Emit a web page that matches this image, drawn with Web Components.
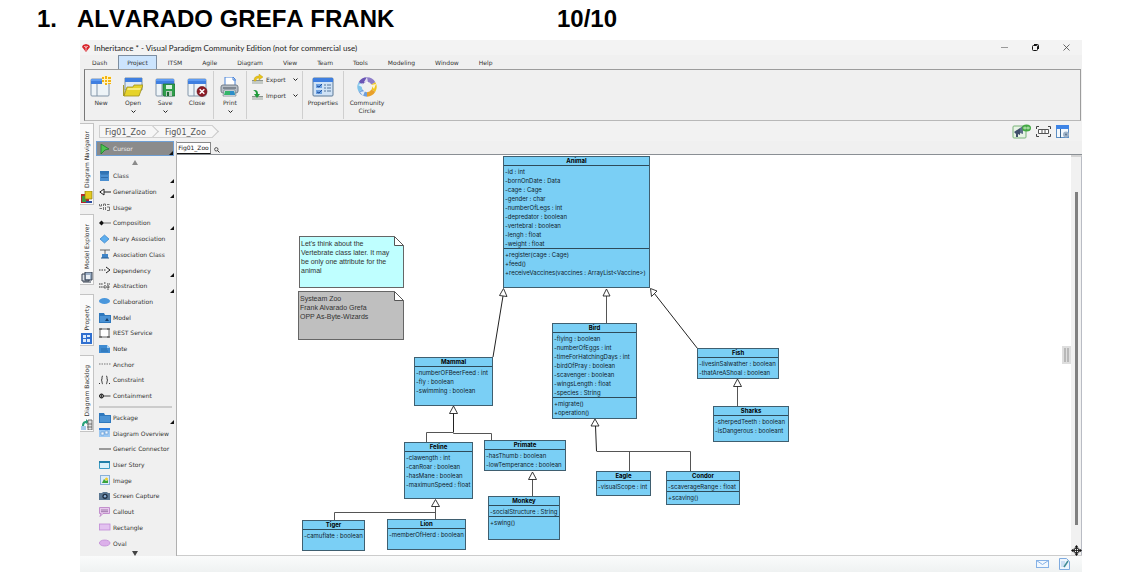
<!DOCTYPE html>
<html lang="en">
<head>
<meta charset="utf-8">
<title>Inheritance - Visual Paradigm</title>
<style>
html, body { margin: 0; background: #fff; }
body { min-height: 100vh; font-family: "DejaVu Sans", sans-serif; font-size: 6px; line-height: 9px; color: #333; display: flex; }
</style>
</head>
<body>
<zoo-page></zoo-page>
<script>
const RESET = `
  *, *::before, *::after { box-sizing: border-box; }
  button { font: inherit; color: inherit; background: none; border: 0; padding: 0; margin: 0; text-align: inherit; }
  a { color: inherit; text-decoration: none; }
  ul, h1, h2, p { margin: 0; padding: 0; list-style: none; font: inherit; }
`;
function define(tag, css, html) {
  const tpl = document.createElement('template');
  customElements.define(tag, class extends HTMLElement {
    constructor() {
      super();
      const root = this.attachShadow({ mode: 'open' });
      tpl.innerHTML = `<style>${RESET}${css}</style>` + (typeof html === 'function' ? html(this) : html);
      root.appendChild(tpl.content.cloneNode(true));
    }
  });
}

/* ---------- icons ---------- */
const win = `<rect x="1" y="2" width="18" height="17" rx="1" fill="#eef4f8" stroke="#8295a8"/><path d="M1 2h18v5H1z" fill="#3f7fe0"/><path d="M1 2h18v2H1z" fill="#5f9cf2"/><path d="M7 7v12" stroke="#8295a8"/>`;
const folderBlue = `<path d="M0 1h5l1 2h6v8H0z" fill="#2f78bd"/><path d="M1 4h10v6H1z" fill="#4c93d4"/>`;
const ICONS = {
  logo: [8, 8, `<path d="M4 0l3 1 1 2-4 5-4-5 1-2z" fill="#d8232a"/><path d="M2 2l2 2 2-2M4 4v3" stroke="#fff" stroke-width=".6" fill="none"/><circle cx="4" cy="2.500" r=".8" fill="#f7b5b5"/>`],
  new: [22, 21, `<g transform="translate(0 1)">${win}</g><path d="M12 0h9v8h-9z" fill="#fff3c4"/><path d="M12 1h2v2h-2zM15 0h2v3h-2zM18 1h3v2h-3zM12 4h2v2h-2zM15 4h2v2h-2zM18 4h3v2h-3zM15 7h2v2h-2zM18 7h3v1h-3z" fill="#f3b412"/>`],
  open: [20, 20, `<path d="M2 1h17v12H2z" fill="#dfeaf5" stroke="#7b8ea0"/><path d="M2 1h17v4H2z" fill="#3f7fe0"/><path d="M0 8h1l1 11H0z" fill="#a59a2e"/><path d="M4 10h6l1-2h9l-4 11H1z" fill="#e6d32a" stroke="#a0911b" stroke-width=".8"/><path d="M5 11h13l-1 2H4z" fill="#f6ec7c"/>`],
  save: [20, 20, `${win}<path d="M8 7h12v12H9l-1-1z" fill="#2f9e4b" stroke="#1d6b31" stroke-width=".7"/><path d="M11 8h6v4h-6z" fill="#d9f2df"/><path d="M11 14h6v5h-6z" fill="#b9cfc0"/><path d="M12 15h2v4h-2z" fill="#1f6b33"/>`],
  close: [21, 20, `${win}<circle cx="15" cy="14.500" r="5" fill="#8d1c26" stroke="#5c0e15" stroke-width=".6"/><path d="M12.700 12.200l4.600 4.600m0-4.600l-4.600 4.600" stroke="#fff" stroke-width="1.500"/>`],
  print: [20, 20, `<path d="M5 0h8l2 2v8H5z" fill="#fff" stroke="#4a84d8"/><path d="M13 0v3h3" fill="none" stroke="#4a84d8"/><rect x="1" y="8" width="17" height="8" rx="2" fill="#b7bec6" stroke="#737d88"/><path d="M3 10h13v2H3z" fill="#7f8892"/><path d="M4 13h11l1 6H3z" fill="#f4f7f9" stroke="#6f7a85" stroke-width=".7"/><path d="M5 14h9l1 4H4z" fill="#35b56a"/><path d="M10 14h4l1 4h-5z" fill="#2c8dc9"/>`],
  export: [12, 10, `<path d="M0 6h11v4H0z" fill="#c4cac6"/><path d="M0 6h11v1H0z" fill="#8b938e"/><path d="M2 7c0-4 2-5 5-5V0l4 3-4 3V4C5 4 4 5 4 7z" fill="#e9c51b" stroke="#b8960d" stroke-width=".4"/>`],
  import: [12, 10, `<path d="M0 6h11v4H0z" fill="#c4cac6"/><path d="M0 6h11v1H0z" fill="#8b938e"/><path d="M1 0c4 0 5 1 5 4h2L5 8 2 4h2C4 2 3 1 1 0z" fill="#1e9a3a"/>`],
  properties: [22, 20, `<rect x="1" y="1" width="20" height="18" rx="1" fill="#cfe2f6" stroke="#5b7896"/><path d="M1 1h20v4H1z" fill="#3f7fe0"/><path d="M4 7h6v4H4zM4 13h6v4H4z" fill="#6ea2e2"/><path d="M5 9l2 1 3-3M5 15l2 1 3-3" stroke="#1e4f9c" fill="none"/><path d="M12 8h2M15 8h4M12 11h2M15 11h4M12 14h2M15 14h4" stroke="#54779c"/>`],
  community: [20, 20, `<g fill="none" stroke-width="4.500"><path d="M3.600 6.300A7.400 7.400 0 0 1 10 2.600" stroke="#6a55b5"/><path d="M10 2.600A7.400 7.400 0 0 1 16.400 6.300" stroke="#8d7cc8"/><path d="M16.400 6.300A7.400 7.400 0 0 1 16.400 13.700" stroke="#f0c51d"/><path d="M16.400 13.700A7.400 7.400 0 0 1 10 17.400" stroke="#e8a02a"/><path d="M10 17.400A7.400 7.400 0 0 1 3.600 13.700" stroke="#6f9fdc"/><path d="M3.600 13.700A7.400 7.400 0 0 1 3.600 6.300" stroke="#7fc3ea"/></g><path d="M10 0l-3 5 4 1zM19 7l-5 1 3 4zM6 19l2-5-5 1zM1 8l4 2 1-4z" fill="#fff" opacity=".8"/>`],
  chevron: [5, 3, `<path d="M.5 .5l2 2 2-2" fill="none" stroke="#222"/>`],
  minimize: [7, 7, `<path d="M0 3.500h7" stroke="#999"/>`],
  restore: [7, 7, `<rect x=".5" y="1.500" width="5" height="5" rx="1" fill="none" stroke="#111"/><path d="M2 .5h3.500q1 0 1 1V5" fill="none" stroke="#111"/>`],
  exit: [7, 7, `<path d="M.5 .5l6 6m0-6l-6 6" stroke="#444" stroke-width=".8"/>`],
  announce: [19, 15, `<rect x="1" y="2" width="13" height="12" rx="1" fill="#e7f3e5" stroke="#79b378"/><path d="M2 8l6-4v7l-2-1v3H4v-3z" fill="#40506b"/><path d="M8 4l3-2v8l-3-1z" fill="#5f6f8c"/><ellipse cx="14.500" cy="4" rx="4.500" ry="3.500" fill="#44a944"/><path d="M11 4h7M13 2.500v3M16 2.500v3" stroke="#d5f2d0" stroke-width=".8"/>`],
  fit: [15, 11, `<path d="M.5 3V.5H3M12 .5h2.500V3M.5 8v2.500H3M12 10.500h2.500V8" fill="none" stroke="#444"/><path d="M2.500 3.500h10v4h-10zM6 3.500v4M9 3.500v4" fill="#fff" stroke="#555"/>`],
  panel: [14, 13, `<rect x=".5" y=".5" width="12" height="12" fill="#f3f8fc" stroke="#5d8fc4"/><path d="M0 0h13v4H0z" fill="#3f85e6"/><path d="M4.500 4v9" stroke="#3a648e"/><circle cx="10" cy="9.500" r="3" fill="#9eb3c9"/><circle cx="10" cy="9.500" r="1" fill="#5d7590"/>`],
  cursor: [12, 10, `<path d="M2 0l8 5-4 1-4 4z" fill="#4dc552" stroke="#1e7d2b" stroke-width=".8"/>`],
  class: [12, 10, `<path d="M1 0h9v10H1z" fill="#4b8fd0"/><path d="M1 0h9v2.500H1z" fill="#2f73b5"/><path d="M2 3h7M2 6.500h7" stroke="#255f99" stroke-width=".7"/>`],
  generalization: [12, 10, `<path d="M5 2v6L.8 5z" fill="#fff" stroke="#222"/><path d="M5 5h7" stroke="#222"/>`],
  usage: [12, 10, `<path d="M.5 2v2h2V2M4.500 4V2h2v2M8 2.500h2.500M.5 6.500h2.500M4.500 5v3M6.500 5v3M8 5h2.500v3.500H8" fill="none" stroke="#555" stroke-width=".8"/>`],
  composition: [12, 10, `<path d="M0 5l2.500-2.500L5 5 2.500 7.500z" fill="#111"/><path d="M5 5h7" stroke="#777"/>`],
  nary: [12, 10, `<path d="M5.500 1L10 5 5.500 9 1 5z" fill="#5eaeee" stroke="#2f7dc4" stroke-width=".7"/>`],
  assoc: [12, 10, `<path d="M1 1h10M6 1v4" stroke="#444" stroke-width=".8"/><path d="M3 5h6v4H3z" fill="#3f84c7"/><path d="M2 9h8" stroke="#245a90"/>`],
  dependency: [12, 10, `<path d="M0 5h7" stroke="#333" stroke-dasharray="1.500 1"/><path d="M7 2l4 3-4 3" fill="none" stroke="#222"/>`],
  abstraction: [12, 10, `<path d="M0 3h4M5 2h2M8 3h3M0 6h6M7 6h4M6 4v4M9 4v5" stroke="#333" stroke-width="1" stroke-dasharray="1.500 .6"/>`],
  collaboration: [12, 10, `<ellipse cx="5.500" cy="5" rx="5.500" ry="3" fill="#4a97dc"/>`],
  model: [12, 11, `${folderBlue}<path d="M6 9l2-3 2 3z" fill="#153f6c"/>`],
  rest: [12, 10, `<rect x="1" y="1" width="9" height="8" fill="#fff" stroke="#666"/><path d="M0 1h3M8 1h3M0 9h3M8 9h3" stroke="#444"/>`],
  note: [12, 10, `<path d="M0 1h8l3 3v5H0z" fill="#3f8bd2"/><path d="M8 1v3h3" fill="#a8d0f2"/><path d="M2 5h6M2 7h7" stroke="#2467a4" stroke-width=".8"/>`],
  anchor: [12, 10, `<path d="M0 5h12" stroke="#777" stroke-dasharray="1.500 1"/>`],
  constraint: [12, 10, `<path d="M4 1q-1.500 0-1 2t-1 2q1 0 1 2t1 2M7 1q1.500 0 1 2t1 2q-1 0-1 2t-1 2" fill="none" stroke="#333" stroke-width=".9"/><path d="M0 8.500h1M10 8.500h1" stroke="#333"/>`],
  containment: [12, 10, `<circle cx="2.500" cy="5" r="2" fill="#fff" stroke="#111"/><path d="M.5 5h11M2.500 3v4" stroke="#333" stroke-width=".9"/>`],
  package: [12, 11, folderBlue],
  overview: [12, 10, `<path d="M0 0h11v9H0z" fill="#9cc8f2"/><path d="M0 0h11v2H0z" fill="#2f7fe0"/><path d="M2 4h3v3H2zM6 3h3v3H6z" fill="#eef6fd" stroke="#5a96d2" stroke-width=".6"/>`],
  connector: [12, 10, `<path d="M0 5h12" stroke="#444"/>`],
  story: [12, 10, `<path d="M.5 1.500h10v7H.5z" fill="#d9f1fa" stroke="#3a9ac2"/><path d="M0 1h11v2H0z" fill="#1f7fa8"/>`],
  image: [12, 11, `<rect x="1.500" y=".5" width="9" height="9" fill="#dcecfa" stroke="#88b0d8"/><path d="M3 8l2-4 2 2 2-1v3z" fill="#38a33a"/><circle cx="7.500" cy="4" r="1.500" fill="#f0cf2b"/>`],
  capture: [12, 10, `<path d="M0 2h3l1-1h4l1 1h2v7H0z" fill="#5a7691"/><circle cx="6" cy="5.300" r="2.600" fill="#1f2f42"/><circle cx="6" cy="5.300" r="1.200" fill="#8fb4dc"/>`],
  callout: [12, 10, `<path d="M.5 .5h10v6H4l-3 3 1-3H.5z" fill="#e9c9ee" stroke="#b77cc4" stroke-width=".8"/><path d="M2 3h7M2 4.700h7" stroke="#7e5689" stroke-width=".7"/>`],
  rectangle: [12, 10, `<rect x=".5" y="2" width="10.500" height="6" fill="#e3c2f0" stroke="#c08ad6" stroke-width=".8"/>`],
  oval: [12, 10, `<ellipse cx="5.700" cy="5" rx="5.300" ry="3" fill="#dcb0ea" stroke="#c08ad6" stroke-width=".8"/>`],
  navigator: [12, 12, `<path d="M0 3h8v9H0z" fill="#b3252b"/><path d="M1 5h4v6H1z" fill="#3a9c43"/><path d="M4 0h7v8H4z" fill="#e4c91f" stroke="#8b7a12" stroke-width=".7"/><path d="M5 10h6v2H5z" fill="#2d4d9e"/>`],
  explorer: [12, 11, `<path d="M1 2h7v7H1z" fill="#dfe5ec" stroke="#333d4d"/><path d="M4 0h7v8H4z" fill="#9cb0c8" stroke="#333d4d"/><path d="M5 3h4v4H5z" fill="#e9eef4"/><path d="M2 10h8" stroke="#333d4d"/>`],
  property: [11, 11, `<path d="M0 0h11v11H0z" fill="#2f6fd0"/><path d="M2 2h3v3H2zM2 6h3v3H2zM6 2h3v2H6zM6 6h3v3H6z" fill="#dcebfb"/>`],
  backlog: [12, 11, `<path d="M1 7c0-4 2-5 4-5V0l3 3-3 2V4C4 4 3 5 3 7z" fill="#27a27a"/><path d="M0 7h5v4H0z" fill="#a6c9ea"/><path d="M7 1h4v10H7zM6 5h5M6 8h5" fill="#e0e0e0" stroke="#555" stroke-width=".8"/>`],
  search: [6, 6, `<circle cx="2.300" cy="2.300" r="1.700" fill="none" stroke="#333" stroke-width=".8"/><path d="M3.500 3.500l2 2" stroke="#333"/>`],
  up: [6, 5, `<path d="M3 0l3 5H0z" fill="#8a8a8a"/>`],
  down: [6, 5, `<path d="M0 0h6L3 5z" fill="#444"/>`],
  corner: [4, 4, `<path d="M4 0v4H0z" fill="#111"/>`],
  move: [11, 11, `<path d="M5.500 0l2 2.500h-4zM5.500 11l2-2.500h-4zM0 5.500l2.500-2v4zM11 5.500l-2.500-2v4z" fill="#111"/><circle cx="5.500" cy="5.500" r="2.500" fill="none" stroke="#111"/><path d="M5.500 2v7M2 5.500h7" stroke="#111" stroke-width=".8"/>`],
  mail: [13, 8, `<rect x=".5" y=".5" width="12" height="7" fill="#f2f8fe" stroke="#86b2e6"/><path d="M.5 .5l6 4 6-4" fill="none" stroke="#86b2e6"/>`],
  edit: [11, 12, `<path d="M.5 .5h7l3 3v8H.5z" fill="#eef5fd" stroke="#7fabdf"/><path d="M2 4h4M2 6h4M2 8h3" stroke="#a9c8ea"/><path d="M9 3L5 9" stroke="#3f8a94" stroke-width="1.500"/>`]
};
define('vp-icon', `:host { display: inline-flex; flex: none; } svg { display: block; }`, el => {
  const [w, h, body] = ICONS[el.getAttribute('name')];
  return `<svg width="${w}" height="${h}" viewBox="0 0 ${w} ${h}" aria-hidden="true">${body}</svg>`;
});

/* ---------- heading ---------- */
define('page-heading', `
  :host { display: block; height: 40px; padding: 5px 0 0 37px; }
  h1 { display: grid; grid-template-columns: 40px 480px auto; font: bold 24px/28px "Liberation Sans", Arial, sans-serif; font-kerning: none; color: #000; white-space: nowrap; }
`, `<h1><span>1.</span><span><slot></slot></span><span><slot name="score"></slot></span></h1>`);

/* ---------- window chrome ---------- */
define('title-bar', `
  :host { display: flex; align-items: center; height: 15px; background: #f3f3f3; padding: 0 12px 0 2px; gap: 4px; font: 8px/10px Lato, sans-serif; color: #222; }
  h2 { flex: 1; white-space: nowrap; }
  .controls { display: flex; gap: 24px; }
  button { display: flex; }
`, `<vp-icon name="logo"></vp-icon><h2><slot></slot></h2>
  <div class="controls"><button aria-label="Minimize"><vp-icon name="minimize"></vp-icon></button><button aria-label="Restore"><vp-icon name="restore"></vp-icon></button><button aria-label="Close window"><vp-icon name="exit"></vp-icon></button></div>`);

define('menu-bar', `
  :host { display: block; }
  nav { display: flex; gap: 2px; height: 14px; padding-left: 3px; }
  button { padding: 0 8px; border: 1px solid transparent; border-bottom: 0; }
  button[aria-current] { background: #cce4fd; border-color: #7d8da0; border-radius: 1px 1px 0 0; }
`, `<nav>${['Dash', 'Project', 'ITSM', 'Agile', 'Diagram', 'View', 'Team', 'Tools', 'Modeling', 'Window', 'Help'].map(n => `<button${n === 'Project' ? ' aria-current="page"' : ''}>${n}</button>`).join('')}</nav>`);

define('ribbon-button', `
  :host { display: block; width: 32px; }
  :host([wide]) { width: 40px; }
  button { width: 100%; display: flex; flex-direction: column; align-items: center; text-align: center; line-height: 8px; }
  .icon { height: 23px; display: flex; align-items: center; }
  .label { min-height: 12px; padding-top: 1px; }
`, el => `<button><span class="icon"><vp-icon name="${el.getAttribute('icon')}"></vp-icon></span><span class="label"><slot></slot></span>${el.hasAttribute('menu') ? '<vp-icon name="chevron"></vp-icon>' : ''}</button>`);

define('ribbon-bar', `
  :host { display: flex; height: 52px; margin: 0 1px 0 4px; border: 1px solid #9c9c9c; border-left-color: #777; border-bottom-color: #b8b8b8; }
  .group { display: flex; padding-top: 4px; border-right: 1px solid #cfcfcf; margin: 1px 0; }
  .last { border: 0; padding-left: 3px; }
  .stack { flex-direction: column; padding: 3px 4px 0 5px; gap: 6px; }
  .stack button { display: flex; align-items: center; gap: 2px; height: 10px; }
  .stack span { width: 25px; }
`, `<div class="group"><ribbon-button icon="new">New</ribbon-button><ribbon-button icon="open" menu>Open</ribbon-button><ribbon-button icon="save" menu>Save</ribbon-button><ribbon-button icon="close">Close</ribbon-button></div>
  <div class="group"><ribbon-button icon="print" menu>Print</ribbon-button></div>
  <div class="group stack"><button><vp-icon name="export"></vp-icon><span>Export</span><vp-icon name="chevron"></vp-icon></button><button><vp-icon name="import"></vp-icon><span>Import</span><vp-icon name="chevron"></vp-icon></button></div>
  <div class="group"><ribbon-button icon="properties" wide>Properties</ribbon-button></div>
  <div class="group last"><ribbon-button icon="community" wide>Community Circle</ribbon-button></div>`);

define('side-tabs', `
  :host { display: flex; flex-direction: column; gap: 9px; width: 14px; padding-top: 2px; flex: none; }
  button { display: flex; flex-direction: column; align-items: center; justify-content: flex-end; gap: 3px; background: #fafafa; border: 1px solid #c4c4c4; border-left: 0; padding-bottom: 1px; }
  span { writing-mode: vertical-rl; transform: rotate(180deg); white-space: nowrap; }
  .l { height: 82px; } .m { height: 71px; } .s { height: 52px; } .k { height: 77px; }
`, [['Diagram Navigator', 'navigator', 'l'], ['Model Explorer', 'explorer', 'm'], ['Property', 'property', 's'], ['Diagram Backlog', 'backlog', 'k']]
  .map(([t, i, c]) => `<button class="${c}"><span>${t}</span><vp-icon name="${i}"></vp-icon></button>`).join(''));

define('crumb-bar', `
  :host { display: flex; align-items: center; justify-content: space-between; height: 20px; padding: 0 12px 0 5px; background: #f2f2f2; }
  nav { display: flex; }
  a { position: relative; height: 13px; width: 60px; padding-left: 6px; font-size: 8px; line-height: 13px; color: #555; border: 1px solid #d0d0d0; border-width: 1px 0; background: #f6f6f6; }
  a:first-child { padding-left: 5px; border-left-width: 1px; width: 54px; }
  a::after { content: ""; position: absolute; z-index: 1; right: -4px; top: 1px; width: 9px; height: 9px; border: 1px solid #c6c6c6; border-width: 1px 1px 0 0; background: #f6f6f6; transform: rotate(45deg); }
  a + a { padding-left: 12px; }
  .tools { display: flex; align-items: center; gap: 5px; }
  button { display: flex; }
`, `<nav aria-label="Breadcrumb"><a href="#model">Fig01_Zoo</a><a href="#diagram">Fig01_Zoo</a></nav>
  <div class="tools"><button aria-label="Announce"><vp-icon name="announce"></vp-icon></button><button aria-label="Fit"><vp-icon name="fit"></vp-icon></button><button aria-label="Panels"><vp-icon name="panel"></vp-icon></button></div>`);

/* ---------- palette ---------- */
define('palette-item', `
  :host { display: flex; flex: 1 1 0; min-height: 0; }
  button { flex: 1; display: flex; align-items: center; gap: 2px; padding-left: 3px; position: relative; white-space: nowrap; }
  .corner { position: absolute; right: 0; bottom: 1px; }
  :host([selected]) { flex: 0 0 15px; }
  :host([selected]) button { background: #8b8b8b; border: 1px solid #6f9fd4; color: #eee; padding-left: 2px; }
  :host([selected]) .corner { bottom: 0; }
`, el => `<button><vp-icon name="${el.getAttribute('icon')}"></vp-icon><slot></slot>${el.hasAttribute('more') ? '<vp-icon class="corner" name="corner"></vp-icon>' : ''}</button>`);

define('tool-palette', `
  :host { display: flex; flex-direction: column; width: 83px; flex: none; padding: 0 2px; border-right: 1px solid #b0b0b0; background: #f0f0f0; }
  .scroll { display: flex; justify-content: center; align-items: center; flex: none; }
  .scroll.top { height: 12px; } .scroll.end { height: 5px; }
  hr { margin: 2px 3px; height: 2px; border: 0; background: #ccc; flex: none; width: 73px; }
`, (() => {
  const item = ([t, i, more]) => `<palette-item icon="${i}"${more ? ' more' : ''}>${t}</palette-item>`;
  return `<palette-item icon="cursor" selected more>Cursor</palette-item>
  <button class="scroll top" aria-label="Scroll up"><vp-icon name="up"></vp-icon></button>` +
  [['Class', 'class', 1], ['Generalization', 'generalization', 1], ['Usage', 'usage'], ['Composition', 'composition', 1], ['N-ary Association', 'nary'], ['Association Class', 'assoc'], ['Dependency', 'dependency', 1], ['Abstraction', 'abstraction', 1], ['Collaboration', 'collaboration'], ['Model', 'model'], ['REST Service', 'rest'], ['Note', 'note'], ['Anchor', 'anchor'], ['Constraint', 'constraint'], ['Containment', 'containment']].map(item).join('') + '<hr>' +
  [['Package', 'package', 1], ['Diagram Overview', 'overview'], ['Generic Connector', 'connector'], ['User Story', 'story'], ['Image', 'image'], ['Screen Capture', 'capture'], ['Callout', 'callout'], ['Rectangle', 'rectangle'], ['Oval', 'oval']].map(item).join('') +
  `<button class="scroll end" aria-label="Scroll down"><vp-icon name="down"></vp-icon></button>`;
})());

/* ---------- diagram ---------- */
const esc = s => s.replace(/</g, '&lt;').replace(/>/g, '&gt;');
const rows = s => s ? `<ul>${s.split('|').map(r => `<li>${esc(r)}</li>`).join('')}</ul>` : '';
define('uml-class', `
  :host { display: block; position: absolute; box-sizing: border-box; border: 1px solid #3f5f70; background: #7acff5; color: #10212b; font: 6px/9px Inter, sans-serif; white-space: nowrap; }
  h2 { font-weight: bold; text-align: center; line-height: 8px; color: #000; }
  ul { border-top: 1px solid #2e4b5a; padding: 1px 0 0 1px; }
`, el => `<h2>${el.getAttribute('name')}</h2>${rows(el.getAttribute('attrs'))}${rows(el.getAttribute('ops'))}`);

define('uml-note', `
  :host { display: block; position: absolute; box-sizing: border-box; border: 1px solid #666; font: 7px/9px "Liberation Sans", Arial, sans-serif; color: #333; padding: 2px 1px; white-space: nowrap; }
  svg { position: absolute; top: -1px; right: -1px; }
`, `<slot></slot><svg width="10" height="10" viewBox="0 0 10 10"><path d="M0 0h10v10z" fill="#fff"/><path d="M.5 .5v9h9z" fill="#fff" stroke="#555"/></svg>`);

const CLASSES = [
  [326, 1, 147, 132, 'Animal', '-id : int|-bornOnDate : Data|-cage : Cage|-gender : char|-numberOfLegs : int|-depredator : boolean|-vertebral : boolean|-lengh : float|-weight : float', '+register(cage : Cage)|+feed()|+receiveVaccines(vaccines : ArrayList<Vaccine>)'],
  [375, 168, 85, 96, 'Bird', '-flying : boolean|-numberOfEggs : int|-timeForHatchingDays : int|-birdOfPray : boolean|-scavenger : boolean|-wingsLength : float|-species : String', '+migrate()|+operation()'],
  [520, 193, 82, 31, 'Fish', '-livesinSalwather : boolean|-thatAreAShoal : boolean', ''],
  [536, 251, 76, 36, 'Sharks', '-sherpedTeeth : boolean|-isDangerous : booleant', ''],
  [237, 202, 79, 49, 'Mammal', '-numberOFBeerFeed : int|-fly : boolean|-swimming : boolean', ''],
  [227, 287, 69, 57, 'Feline', '-clawength : int|-canRoar : boolean|-hasMane : boolean|-maximunSpeed : float', ''],
  [307, 285, 82, 31, 'Primate', '-hasThumb : boolean|-lowTemperance : boolean', ''],
  [125, 365, 63, 31, 'Tiger', '-camuflate : boolean', ''],
  [210, 364, 79, 31, 'Lion', '-memberOfHerd : boolean', ''],
  [311, 341, 72, 44, 'Monkey', '-socialStructure : String', '+swing()'],
  [419, 316, 55, 25, 'Eagle', '-visualScope : int', ''],
  [489, 316, 74, 34, 'Condor', '-scaverageRange : float', '+scaving()']
];
define('zoo-diagram', `
  :host { display: block; position: relative; flex: 1; background: #fff; overflow: hidden; }
  .lines { position: absolute; left: 0; top: 0; }
  .aqua { background: #bfffff; } .grey { background: #bfbfbf; }
`, `<svg class="lines" width="894" height="400" viewBox="177 155 894 400" aria-hidden="true">
    <g fill="none" stroke="#555" stroke-width="1">
      <path d="M493 357L503 296M654 293L697.500 348.500" stroke="#222"/>
      <path d="M606.500 296v27M737.500 386v20M532.500 479v17"/>
      <path d="M453.500 413v19" stroke="#222"/><path d="M453.500 432.500h-27v10M453.500 432.500v1h38v7"/>
      <path d="M435.500 506v13M435.500 512.500h-101v8"/>
      <path d="M595.500 426l1 25" stroke="#222"/><path d="M596.500 451.500h94v20M629.500 451.500v20"/>
    </g>
    <g fill="#fff" stroke="#222" stroke-width=".9">
      <path d="M503.500 288.500l3.500 8-7.500-1z"/><path d="M606.500 289l3.500 7h-7zM737.500 379l4 7.500h-8zM532.500 472l4 7.500h-8zM453.500 406l4 7.500h-8zM435.500 499.500l4 7h-8zM595 419l4 7h-8z"/><path d="M650.500 288.500l6.500 2.500-5.500 5.500z"/>
    </g>
  </svg>
  <uml-note class="aqua" style="left:122px;top:81px;width:105px;height:52px">Let's think about the<br>Vertebrate class later. It may<br>be only one attribute for the<br>animal</uml-note>
  <uml-note class="grey" style="left:121px;top:136px;width:106px;height:49px">Systeam Zoo<br>Frank Alvarado Grefa<br>OPP As-Byte-Wizards</uml-note>` +
  CLASSES.map(([x, y, w, h, n, a, o]) => `<uml-class style="left:${x}px;top:${y}px;width:${w}px;height:${h}px" name="${n}" attrs="${esc(a)}" ops="${esc(o)}"></uml-class>`).join(''));

define('diagram-editor', `
  :host { display: flex; flex-direction: column; flex: 1; min-width: 0; }
  .tabs { display: flex; align-items: flex-end; height: 13px; gap: 3px; background: #f0f0f0; flex: none; }
  .tabs .tab { height: 12px; width: 34px; text-align: center; background: #fff; border: 1px solid #888; border-left: 0; color: #222; border-bottom-color: #111; line-height: 10px; }
  .tabs vp-icon { margin-bottom: 1px; }
  .body { flex: 1; display: flex; border-top: 1px solid #8a8f94; border-bottom: 1px solid #ccc; position: relative; }
  .bar { display: flex; justify-content: center; width: 11px; border-right: 1px solid #b9bcc4; border-top: 2px solid #d4d4d4; background: #f1f1f1; padding: 35px 0 30px; flex: none; }
  .bar i { width: 3px; background: #808080; }
  .grip { position: absolute; right: 11px; top: 191px; width: 9px; height: 18px; background: #dedede; display: flex; justify-content: center; gap: 1px; padding: 2px 0; }
  .grip i { width: 2px; background: #b8b8b8; }
  .move { position: absolute; right: 0; bottom: -1px; }
`, `<div class="tabs"><button class="tab">Fig01_Zoo</button><vp-icon name="search"></vp-icon></div>
  <div class="body"><zoo-diagram></zoo-diagram><div class="bar"><i></i></div><div class="grip"><i></i><i></i></div><vp-icon class="move" name="move"></vp-icon></div>`);

define('status-bar', `
  :host { display: flex; justify-content: flex-end; align-items: center; gap: 10px; height: 16px; padding-right: 12px; background: linear-gradient(#fafbfb, #eff2f2); }
  button { display: flex; }
`, `<button aria-label="Messages"><vp-icon name="mail"></vp-icon></button><button aria-label="Description"><vp-icon name="edit"></vp-icon></button>`);

define('app-window', `
  :host { display: flex; flex-direction: column; flex: 1; margin: 0 44px 10px 80px; background: #f0f0f0; }
  .body { flex: 1; display: flex; }
  .main { flex: 1; display: flex; flex-direction: column; min-width: 0; }
  .work { flex: 1; display: flex; }
  title-bar, menu-bar, ribbon-bar, status-bar { flex: none; }
`, `<title-bar>Inheritance * - Visual Paradigm Community Edition (not for commercial use)</title-bar>
  <menu-bar></menu-bar><ribbon-bar></ribbon-bar>
  <div class="body"><side-tabs></side-tabs><div class="main"><crumb-bar></crumb-bar><div class="work"><tool-palette></tool-palette><diagram-editor></diagram-editor></div></div></div>
  <status-bar></status-bar>`);

define('zoo-page', `:host { display: flex; flex-direction: column; flex: 1; min-width: 0; }`,
  `<page-heading>ALVARADO GREFA FRANK<span slot="score">10/10</span></page-heading><app-window></app-window>`);
</script>
</body>
</html>
